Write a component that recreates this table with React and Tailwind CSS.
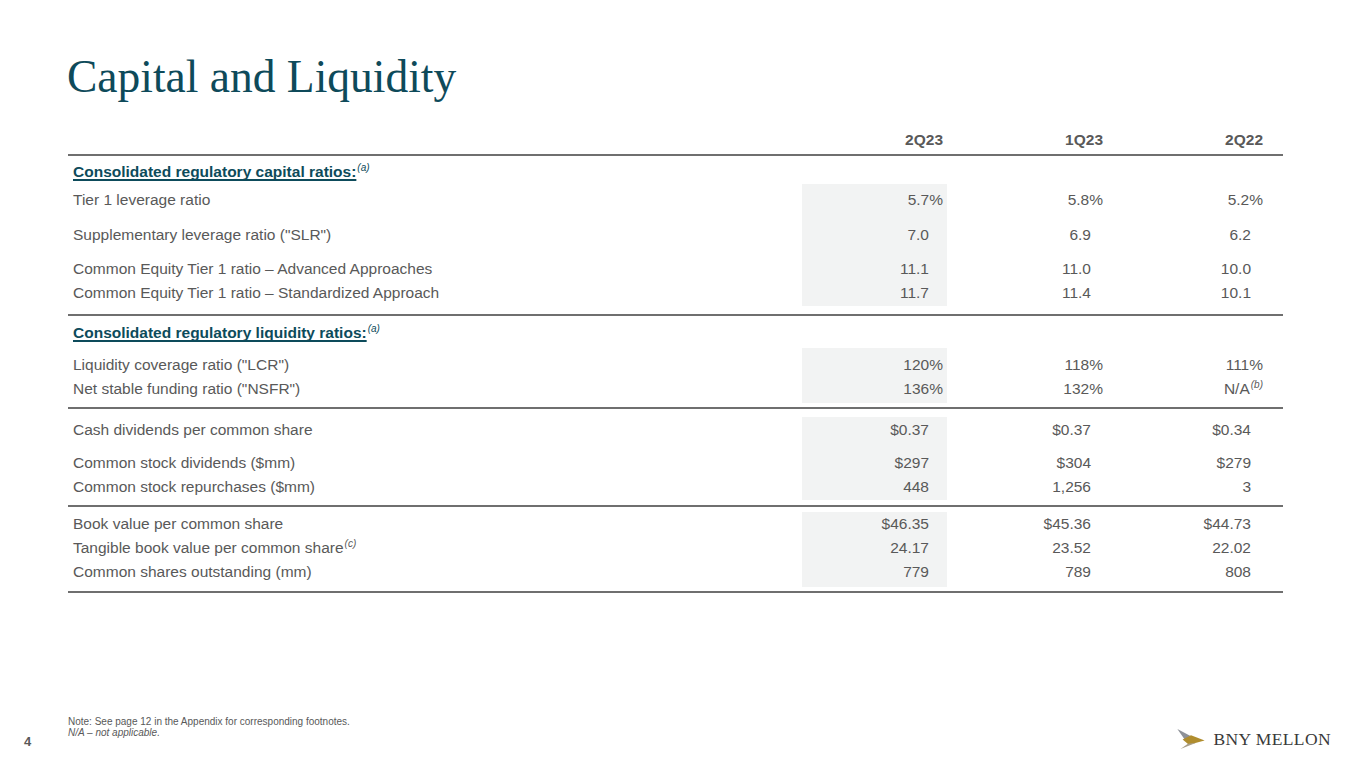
import React from "react";

const GRID = "grid grid-cols-[734px_145px_160px_160px_1fr]";
const SANS = { fontFamily: '"Liberation Sans", Arial, sans-serif' };

function Sup({ children }) {
  return (
    <span className="relative -top-[6px] ml-[1px] text-[10px] italic leading-none">{children}</span>
  );
}

function Row({ label, values, pct, h, pt, labelSup, lastSup }) {
  const prs = pct
    ? ["pr-[4px]", "pr-[4px]", "pr-[4px]"]
    : ["pr-[18px]", "pr-[16px]", "pr-[16px]"];
  return (
    <div className={`${GRID} ${h} text-[15.5px] leading-[18px] text-[#595959]`}>
      <div className={`pl-[5px] ${pt}`}>
        {label}
        {labelSup && <Sup>{labelSup}</Sup>}
      </div>
      <div className={`bg-[#f2f3f3] text-right ${pt} ${prs[0]}`}>{values[0]}</div>
      <div className={`text-right ${pt} ${prs[1]}`}>{values[1]}</div>
      <div className={`text-right ${pt} ${lastSup ? "pr-[4px]" : prs[2]}`}>
        {values[2]}
        {lastSup && <Sup>{lastSup}</Sup>}
      </div>
      <div />
    </div>
  );
}

function Heading({ children, h, pt }) {
  return (
    <div className={`${h} ${pt} pl-[5px] text-[15.5px] leading-[18px]`}>
      <span className="font-bold text-[#0d4b5b] underline decoration-[1.5px] underline-offset-[2px] [text-decoration-skip-ink:none]">
        {children}
      </span>
      <span className="text-[#0d4b5b]">
        <Sup>(a)</Sup>
      </span>
    </div>
  );
}

const Line = () => <div className="h-[2px] bg-[#6f6f6f]" />;

export default function App() {
  return (
    <div className="w-[1365px] h-[768px] bg-white flex flex-col overflow-hidden" style={SANS}>
      <h1
        className="mt-[54px] ml-[67px] text-[45.5px] leading-[46px] text-[#0e4a5a]"
        style={{ fontFamily: '"Liberation Serif", "Times New Roman", serif' }}
      >
        Capital and Liquidity
      </h1>

      <div className="ml-[68px] w-[1215px] mt-[31px]">
        <div className={`${GRID} h-[23px] text-[15.5px] leading-[18px] font-bold text-[#595959]`}>
          <div />
          <div className="text-right pr-[4px]">2Q23</div>
          <div className="text-right pr-[4px]">1Q23</div>
          <div className="text-right pr-[4px]">2Q22</div>
          <div />
        </div>
        <Line />
        <Heading h="h-[28px]" pt="pt-[7px]">Consolidated regulatory capital ratios:</Heading>
        <Row label="Tier 1 leverage ratio" values={["5.7%", "5.8%", "5.2%"]} pct h="h-[33px]" pt="pt-[7px]" />
        <Row label={'Supplementary leverage ratio ("SLR")'} values={["7.0", "6.9", "6.2"]} h="h-[35px]" pt="pt-[9px]" />
        <Row label="Common Equity Tier 1 ratio – Advanced Approaches" values={["11.1", "11.0", "10.0"]} h="h-[31px]" pt="pt-[8px]" />
        <Row label="Common Equity Tier 1 ratio – Standardized Approach" values={["11.7", "11.4", "10.1"]} h="h-[23px]" pt="pt-[1px]" />
        <div className="h-[8px]" />
        <Line />
        <Heading h="h-[32px]" pt="pt-[8px]">Consolidated regulatory liquidity ratios:</Heading>
        <Row label={'Liquidity coverage ratio ("LCR")'} values={["120%", "118%", "111%"]} pct h="h-[29px]" pt="pt-[8px]" />
        <Row label={'Net stable funding ratio ("NSFR")'} values={["136%", "132%", "N/A"]} pct lastSup="(b)" h="h-[26px]" pt="pt-[3px]" />
        <div className="h-[4px]" />
        <Line />
        <div className="h-[8px]" />
        <Row label="Cash dividends per common share" values={["$0.37", "$0.37", "$0.34"]} h="h-[30px]" pt="pt-[4px]" />
        <Row label="Common stock dividends ($mm)" values={["$297", "$304", "$279"]} h="h-[28px]" pt="pt-[7px]" />
        <Row label="Common stock repurchases ($mm)" values={["448", "1,256", "3"]} h="h-[25px]" pt="pt-[3px]" />
        <div className="h-[5px]" />
        <Line />
        <div className="h-[5px]" />
        <Row label="Book value per common share" values={["$46.35", "$45.36", "$44.73"]} h="h-[24px]" pt="pt-[3px]" />
        <Row label="Tangible book value per common share" labelSup="(c)" values={["24.17", "23.52", "22.02"]} h="h-[24px]" pt="pt-[3px]" />
        <Row label="Common shares outstanding (mm)" values={["779", "789", "808"]} h="h-[27px]" pt="pt-[3px]" />
        <div className="h-[4px]" />
        <Line />
      </div>

      <div className="mt-auto h-[58px] flex items-start">
        <div className="w-[68px] pl-[24px] pt-[24px] text-[13px] leading-[16px] font-bold text-[#595959]">4</div>
        <div className="flex-1 pt-[6px] text-[10px] leading-[11px] text-[#595959]">
          <div>Note: See page 12 in the Appendix for corresponding footnotes.</div>
          <div className="italic">N/A – not applicable.</div>
        </div>
        <div className="flex items-start pr-[34px] pt-[19px]">
          <svg width="30" height="21" viewBox="0 0 28 20" className="mr-[7px]">
            <polygon points="1,0 14,7 8,10" fill="#8e9198" />
            <polygon points="6,10 14,6 27,11 12,15" fill="#b08d2e" />
            <polygon points="4,19 11,14 19,13" fill="#a89e8a" />
          </svg>
          <div
            className="text-[17.5px] leading-[20px] tracking-[0.4px] text-[#3a3a3a]"
            style={{ fontFamily: '"Liberation Serif", "Times New Roman", serif' }}
          >
            BNY MELLON
          </div>
        </div>
      </div>
    </div>
  );
}
